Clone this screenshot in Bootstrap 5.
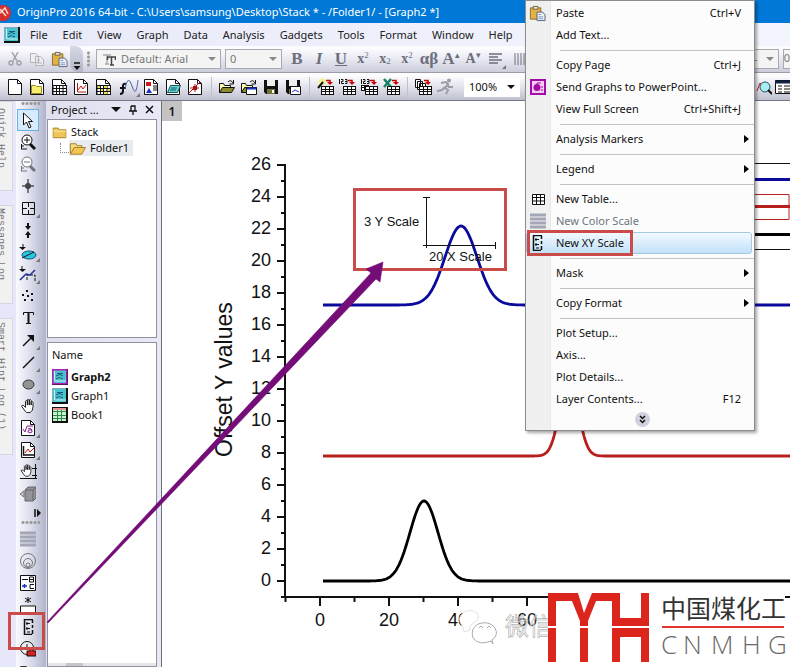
<!DOCTYPE html>
<html lang="en">
<head>
<meta charset="utf-8">
<meta name="viewport" content="width=device-width, initial-scale=1">
<title>OriginPro 2016</title>
<link href="https://cdn.jsdelivr.net/npm/bootstrap@5.3.0/dist/css/bootstrap.min.css" rel="stylesheet">
<style>
body{font:11px/16px "Noto Sans","Open Sans",sans-serif;color:#111;background:#e6e7f8}
button,select{font:inherit;color:inherit}
button{background:none;border:0;padding:0}
svg{display:block;flex:none}
.titlebar{height:23px;background:#0078d7;color:#fff;white-space:nowrap}
.menubar{height:23px;background:linear-gradient(90deg,#e9eaf8,#f3f5fe);gap:15px}
.menubar a{color:#222;text-decoration:none}
.menubar svg{margin-right:-5px}
.strip{height:27px;background:linear-gradient(#fcfcff 10%,#e6e6f0 55%,#cccddb);border-bottom:1px solid #9c9ca8}
.strip.second{height:28px;background:linear-gradient(#fdfdff 10%,#dddde8 60%,#bfc0cf);border-bottom:1px solid #77778a}
.slot{width:22px;height:22px;display:flex;align-items:center;justify-content:center;flex:none;position:relative}
.slot.corner::after{content:"";position:absolute;right:0;bottom:1px;border:2px solid transparent;border-right-color:#777;border-bottom-color:#777}
.fmt{color:#6c6f7c;font:bold 17px/22px "Liberation Serif",serif}
.fmt.small-x{font-size:14px}
.fmt sup,.fmt sub{font-size:9px;font-weight:400}
.rule{width:1px;height:20px;background:#bfc0cc;margin:0 4px 0 5px;flex:none}
.grip-v{width:3px;height:16px;background:radial-gradient(circle,#999 1px,transparent 2px) 0 0/3px 4px;flex:none;margin:0 6px 0 4px}
.grip-h{height:3px;width:19px;background:radial-gradient(circle,#999 1px,transparent 2px) 0 0/4px 3px;flex:none}
.combo{height:20px;border:1px solid #a9a9b2;background:#f4f4f4;color:#777;position:relative;flex:none}
.combo select{appearance:none;background:none;border:0;width:100%;height:18px;line-height:18px;padding:0 4px;outline:0}
.combo.arrowed::after{content:"";position:absolute;right:4px;top:7px;border:4px solid transparent;border-top-color:#888;border-bottom:0;pointer-events:none}
.combo.font-box{width:125px}.combo.font-box select{padding-left:24px}
.combo.font-box svg{position:absolute;left:6px;top:4px}
.combo.size-box{width:57px}.combo.edge-box{width:32px}
.combo.zoom-box{width:56px;background:#fff;color:#111;border-color:#fff}
.combo.zoom-box::after{border-top-color:#111}
.more{width:13px;height:26px;background:linear-gradient(#d8d9e6,#b4b5c8);border-radius:0 8px 0 8px;flex:none}
.docktabs{width:16px;flex:none;overflow:hidden;padding-bottom:212px;gap:14px}
.docktabs button{writing-mode:vertical-rl;font:10px/14px "Liberation Mono",monospace;color:#777;background:#f1f1f1;border:1px solid #d6d6e2;border-left:0;width:20px;margin-left:-7px;text-align:left;white-space:nowrap;padding-right:5px}
.tab-a{height:90px;padding-top:6px!important}.tab-b{height:99px;padding-top:2px!important}.tab-c{height:137px;padding-top:3px!important}
.tools{width:30px;background:linear-gradient(90deg,#f9f9ff,#dfe0ed 45%,#b1b3ca);flex:none;padding:1px 0 0 1px;overflow:hidden}
.tools>*{flex:none}
.tools .picked{border:1px solid #6ab0e4;background:#d7ebfc}
.tools .slot.corner::after{right:-1px}
.tools .fold{height:16px;width:29px;padding-left:12px}
.explorer{width:115px;flex:none;padding:0 4px 0 1px;background:linear-gradient(90deg,#dfe0ee,#e9e9f6)}
.explorer h2{font:11px/18px "Noto Sans",sans-serif;height:18px;margin:0}
.panel-box{background:#fff;border:1px solid #8f90a2}
.tree{height:219px;flex:none}
.tree ul{list-style:none;margin:0;padding:0}
.tree .branch{border-left:1px dotted #888;border-bottom:1px dotted #888;width:9px;height:10px;margin-left:12px}
.files button{height:19px;gap:3px}
.hbar{height:3px;background:#e6e6e6}
.hbar i{display:block;height:3px;width:17px;margin-left:18px;background:#c6c6c6}
.edge{width:1px;background:#70707c;flex:none}
.canvas{background:#fff;min-width:0;position:relative;overflow:hidden}
.layer-no{width:20px;height:20px;background:#c4c4c4;position:absolute;left:0;top:0;font-weight:600;font-size:12px;line-height:22px;text-align:center}
.plot text{font-family:"Liberation Sans",Arial,sans-serif;fill:#111}
.ctx{position:absolute;left:525px;top:0;width:230px;background:linear-gradient(90deg,#f0f0f0 24px,#d4d4d4 24px,#fcfcfc 25px);border:1px solid #8c8c8c;box-shadow:2px 2px 3px rgba(0,0,0,.35);padding:1px 2px 0 0}
.ctx .entry{display:flex;align-items:center;width:100%;height:22px;padding-right:10px;border:1px solid transparent}
.ctx .entry .pic{width:22px;margin-right:7px;display:flex;justify-content:center}
.ctx .entry.hot{background:linear-gradient(#f2f9ff,#c1e1f8);border-color:#a4c8e2;border-radius:3px}
.ctx .entry.hot .pic,.ctx .entry .pic.near{justify-content:flex-start;padding-left:2px}
.ctx .entry .sub{margin-right:-8px}
.ctx .gap-line{height:8px;display:flex;align-items:center}
.ctx .gap-line::before{content:"";flex:1;height:1px;background:#c2c2c6;margin-left:34px;margin-right:-2px}
.chev{width:15px;height:15px;border-radius:50%;background:#d0d1de;margin:2px auto 3px 109px;display:flex;align-items:center;justify-content:center}
.over{position:absolute;left:0;top:0;pointer-events:none}
</style>
</head>
<body class="vh-100 overflow-hidden d-flex flex-column position-relative">
<svg width="0" height="0" class="position-absolute" aria-hidden="true"><defs>
<symbol id="page" viewBox="0 0 16 16"><path d="M1.500 .5h9l4 4v11h-13z" fill="#fff" stroke="#111"/><path d="M10.500 .5v4h4" fill="none" stroke="#111"/></symbol>
<symbol id="grid" viewBox="0 0 16 16"><path d="M2 6h13v9H2z" fill="#fff"/><path d="M1.500 6.500h14M1.500 9.500h14M1.500 12.500h14M1.500 15.500h14M2 6v10M5.500 6v10M8.500 6v10M12 6v10M15.500 6v10" stroke="#111" fill="none"/></symbol>
<symbol id="gwin" viewBox="0 0 16 16"><path d="M0 0h16v16H0z" fill="#111"/><path d="M0 0h14v14H0z" fill="#8ab"/><path d="M1 1h13v13H1z" fill="#49c3cf"/><path d="M5 4.500h6M4 7q4-3 7 0M4 10q3-3 7 0" stroke="#135a78" fill="none"/><path d="M2.500 2v10M3 12h11" stroke="#c9eef0"/></symbol>
<symbol id="folder" viewBox="0 0 16 16"><path d="M.5 3.500h6l1 2h8v9H.5z" fill="#efc65c" stroke="#a57c26"/><path d="M1 7h14" stroke="#fff0b0"/></symbol>
<symbol id="openf" viewBox="0 0 18 16"><path d="M1.500 14V3.500h6l1 2h5v3" fill="#f7da83" stroke="#a57c26"/><path d="M1.500 14.500l4-7h12l-4 7z" fill="#f1c653" stroke="#a57c26"/></symbol>
<symbol id="openb" viewBox="0 0 16 16"><path d="M.5 13.500v-9h4l1 2h6v2" fill="#ffffb0" stroke="#111"/><path d="M.5 13.500l3-5h12l-3 5z" fill="#8e8b2e" stroke="#111"/><path d="M9 3q3-3 5 1M14.500 1v4h-4" fill="none" stroke="#111"/></symbol>
<symbol id="disk" viewBox="0 0 16 16"><path d="M1 1h14v14H3l-2-2z" fill="#111"/><path d="M4 1h8v6H4z" fill="#eee"/><path d="M4 10h8v5H4z" fill="#74743a"/><path d="M9 11h2v3H9z" fill="#fff"/></symbol>
<symbol id="redarr" viewBox="0 0 18 18"><path d="M10 2.500h4v2" fill="none" stroke="#c00" stroke-width="1.500"/><path d="M11 4h6l-3 3z" fill="#c00"/></symbol>
<symbol id="sheet" viewBox="0 0 18 18"><path d="M5 8h13v9H5z" fill="#111"/><path d="M6 9h3v2H6zM10 9h3v2h-3zM14 9h3v2h-3zM6 12h3v1H6zM10 12h3v1h-3zM14 12h3v1h-3zM6 14h3v2H6zM10 14h3v2h-3zM14 14h3v2h-3z" fill="#fff"/></symbol>
<symbol id="nums" viewBox="0 0 18 18"><path d="M1.500 1v5M3 1.500h2v2H3.500v2H6M7 1.500h2v4H7M7 3.500h2" stroke="#111" fill="none"/></symbol>
<symbol id="lens" viewBox="0 0 16 16"><path d="M10 10l5 5" stroke="currentColor" stroke-width="3"/><circle cx="7" cy="6" r="5" fill="#fff" stroke="currentColor"/><path d="M4 6h6" stroke="currentColor"/><path d="M1.500 10v5M1 15h6M1 12h3" stroke="currentColor" fill="none"/></symbol>
<symbol id="paste" viewBox="0 0 18 18"><path d="M1.500 3h11v12h-11z" fill="#e3b243" stroke="#8a6a2a"/><path d="M4.500 1.500h5v3h-5z" fill="#e8e2cc" stroke="#6d614a"/><path d="M8.500 7.500h6l2.500 3v6H8.500z" fill="#eef2fa" stroke="#53617a"/><path d="M10 10h3M10 12.500h5M10 14.500h5" stroke="#7c96c0"/></symbol>
<symbol id="xy" viewBox="0 0 16 16"><path d="M4 .5h9M4.500 0v16M4 15.500h8M12.500 1v3M12.500 6v3M12.500 11v4" stroke="#111" fill="none" stroke-width="1.500"/><path d="M7 3v3M6 4.500h4M7 8v3M6 9.500h4M7 13h3" stroke="#111" fill="none"/></symbol>
<symbol id="hand" viewBox="0 0 16 16"><path d="M4.500 13.500L.8 8.500q0-2 2-1l2 2V3q1-2 2 0v4V1.500q1-2 2 0V7V2q1-2 2 0v5V4q1-2 2 0v5q0 4-3 6H6z" fill="#fff" stroke="#111"/></symbol>
<symbol id="bars" viewBox="0 0 16 16"><path d="M0 2h16M0 6h16M0 10h16M0 14h16" stroke="#a3a6b6" stroke-width="3"/></symbol>
</defs></svg>

<header class="titlebar d-flex align-items-center flex-shrink-0">
<svg width="17" height="18" viewBox="0 0 17 18"><circle cx="3" cy="10" r="8" fill="#d42e2e"/><path d="M-2 12L5 5l3 6M0 6l6 7" stroke="#ffd9d0" stroke-width="1.500" fill="none"/></svg>
<span>OriginPro 2016 64-bit - C:\Users\samsung\Desktop\Stack * - /Folder1/ - [Graph2 *]</span>
</header>
<nav class="menubar d-flex align-items-center flex-shrink-0 ps-1">
<svg width="16" height="16"><use href="#gwin"/></svg>
<a href="#">File</a><a href="#">Edit</a><a href="#">View</a><a href="#">Graph</a><a href="#">Data</a><a href="#">Analysis</a><a href="#">Gadgets</a><a href="#">Tools</a><a href="#">Format</a><a href="#">Window</a><a href="#">Help</a>
</nav>

<div class="strip d-flex align-items-center flex-shrink-0 ps-1">
<button class="slot" aria-label="Cut"><svg width="14" height="14" viewBox="0 0 14 14" fill="none" stroke="#a2a2a8" stroke-width="1.500"><path d="M4 0l5 9M10 0L5 9"/><circle cx="3" cy="11" r="2"/><circle cx="11" cy="11" r="2"/></svg></button>
<button class="slot" aria-label="Copy"><svg width="16" height="14" viewBox="0 0 16 14" fill="#eee" stroke="#b5b5bc"><path d="M1.500 1.500h5l3 3v6h-8zM6.500 4.500h5l3 3v6h-8z"/><path d="M8 8h3M8 11h5"/></svg></button>
<button class="slot" aria-label="Paste"><svg width="17" height="17"><use href="#paste"/></svg></button>
<button class="more" aria-label="More"><svg width="13" height="26" viewBox="0 0 13 26"><path d="M4 17h6" stroke="#111" stroke-width="1.500"/><path d="M3.500 20h7L7 24z" fill="#111"/></svg></button>
<span class="grip-v"></span>
<label class="combo arrowed font-box"><svg width="13" height="12" viewBox="0 0 13 12"><path d="M0 1h8M4 1v9M2 10h4" stroke="#aaa" stroke-width="1.500"/><path d="M4 3h9M8.500 3v8M7 11h4M4.500 3v3M12.500 3v3" stroke="#444" stroke-width="1.500"/></svg><select aria-label="Font"><option>Default: Arial</option></select></label>
<label class="combo arrowed size-box ms-1 me-1"><select aria-label="Font size"><option>0</option></select></label>
<button class="slot fmt">B</button><button class="slot fmt fst-italic">I</button><button class="slot fmt text-decoration-underline">U</button>
<button class="slot fmt small-x">x<sup>2</sup></button><button class="slot fmt small-x">x<sub>2</sub></button><button class="slot fmt small-x">x<sup>2</sup></button>
<button class="slot fmt">αβ</button><button class="slot fmt">A<sup>▴</sup></button><button class="slot fmt small-x">A<sup>▾</sup></button>
<button class="slot corner" aria-label="Align"><svg width="13" height="12" viewBox="0 0 13 12"><path d="M0 1h13M0 4h9M0 7h13M0 10h9" stroke="#6c6f7c" stroke-width="1.500"/></svg></button>
<button class="slot ms-1" aria-label="Lines"><svg width="14" height="12" viewBox="0 0 14 12"><path d="M1 0v12M4 0v12M7 0v12M10 0v12M13 0v12" stroke="#6c6f7c"/></svg></button>
<label class="combo arrowed edge-box ms-auto me-1"><select aria-label="Line style"><option>–</option></select></label>
<span class="combo border-end-0">0</span>
</div>

<div class="strip second d-flex align-items-center flex-shrink-0 ps-1">
<button class="slot" aria-label="New project"><svg width="16" height="16"><use href="#page"/></svg></button>
<button class="slot" aria-label="New folder"><svg width="16" height="16"><use href="#page"/><path d="M2.500 14.500v-8h4l1 1h5v7z" fill="#f5ee70" stroke="#998c28"/></svg></button>
<button class="slot" aria-label="New workbook"><svg width="16" height="16"><use href="#page"/><use href="#grid"/></svg></button>
<button class="slot" aria-label="New graph"><svg width="16" height="16"><use href="#page"/><path d="M4.500 4v9H13" stroke="#a22" fill="none"/><path d="M5 11l3-4 2 3 3-4" stroke="#c11" fill="none"/></svg></button>
<button class="slot" aria-label="New matrix"><svg width="16" height="16"><use href="#page"/><use href="#grid"/><path d="M3 7h2v2H3zM6 10h2v2H6zM9 7h3v2H9zM13 10h2v2h-2zM9 13h3v2H9z" fill="#f0e040"/></svg></button>
<button class="slot corner ms-1" aria-label="New function"><svg width="20" height="16" viewBox="0 0 20 16"><path d="M7 5Q4 4 4 7v5q0 3-3 3M1 9h6" fill="none" stroke="#111" stroke-width="2"/><path d="M6 10q3-16 7-3t6-6" fill="none" stroke="#4965b5"/></svg></button>
<button class="slot" aria-label="New layout"><svg width="16" height="16"><use href="#page"/><path d="M3 3h5v4H3z" fill="#d21919"/><path d="M10 7h4M10 9h4M10 11h4" stroke="#111"/><path d="M3 14l3-5 3 5z" fill="#1a31c5"/></svg></button>
<button class="slot" aria-label="New notes"><svg width="16" height="16"><use href="#page"/><path d="M2.500 13.500l3-7h10l-3 7z" fill="#69d6da" stroke="#155"/><path d="M6 9h6M5 11h6" stroke="#155"/></svg></button>
<button class="slot" aria-label="New equation"><svg width="16" height="16"><use href="#page"/><path d="M2 14L13 3M3 9h9M8 5v8" stroke="#c31616"/><path d="M6 7h4v4H6z" fill="#a11"/></svg></button>
<span class="rule"></span>
<button class="slot" aria-label="Open"><svg width="16" height="16"><use href="#openb"/></svg></button>
<button class="slot" aria-label="Open template"><svg width="16" height="16"><use href="#openb"/><path d="M5.500 8.500h10v7h-10z" fill="#fff" stroke="#111"/><path d="M6 9.500h9" stroke="#1a31c5" stroke-width="2"/></svg></button>
<button class="slot" aria-label="Save"><svg width="16" height="16"><use href="#disk"/></svg></button>
<button class="slot" aria-label="Save template"><svg width="16" height="16"><use href="#disk"/><path d="M5.500 7.500h10v8h-10z" fill="#fff" stroke="#111"/><path d="M7 13l3-2 4 2" stroke="#1a31c5" fill="none"/></svg></button>
<span class="rule"></span>
<button class="slot" aria-label="Import wizard"><svg width="18" height="18"><circle cx="6" cy="4" r="3.500" fill="#f6f28a"/><path d="M2 10l5-6" stroke="#111" stroke-width="2"/><use href="#sheet"/><use href="#redarr"/></svg></button>
<button class="slot" aria-label="Import ASCII"><svg width="18" height="18"><use href="#sheet"/><use href="#nums"/><use href="#redarr"/></svg></button>
<button class="slot" aria-label="Import multiple"><svg width="18" height="18"><path d="M1 7h8v6H1z" fill="#111"/><path d="M2 8h2v1H2zM5 8h3v1H5zM2 10h2v2H2z" fill="#fff"/><use href="#sheet"/><use href="#nums"/><use href="#redarr"/></svg></button>
<button class="slot" aria-label="Import Excel"><svg width="18" height="18"><path d="M2 1l7 8M9 1L2 9" stroke="#138060" stroke-width="2.500"/><use href="#sheet"/><use href="#redarr"/></svg></button>
<span class="rule"></span>
<button class="slot" aria-label="Batch"><svg width="18" height="18"><path d="M1.500 1.500h5v8h-5zM3.500 3.500h5v8h-5zM5.500 5.500h6v8h-6z" fill="#fff" stroke="#111"/><use href="#sheet"/><use href="#redarr"/></svg></button>
<button class="slot" aria-label="Run"><svg width="17" height="17" viewBox="0 0 17 17"><circle cx="12" cy="2.500" r="2" fill="#9a9ca6"/><path d="M4 5l5-1 2 2-3 4 3 2-2 4M8 9l-3 3-5 1M10 6l2 3h4" fill="none" stroke="#9a9ca6" stroke-width="2"/></svg></button>
<label class="combo arrowed zoom-box ms-2"><select aria-label="Zoom"><option>100%</option></select></label>
<button class="slot ms-auto" aria-label="Find"><svg width="16" height="16"><path d="M1 12l3-8 4 4" stroke="#c11" fill="none"/><circle cx="9" cy="8" r="5" fill="#a9eef2" stroke="#256"/><path d="M12 11l4 4" stroke="#111" stroke-width="2"/></svg></button>
<svg width="15" height="14"><path d="M.5 .5h18v13H.5z" fill="#fff" stroke="#111"/><path d="M0 2h18" stroke="#124" stroke-width="3"/><path d="M3 6h4M9 6h6M3 9h4M9 9h6M3 12h4M9 12h6" stroke="#111"/></svg>
</div>

<div class="d-flex flex-grow-1 overflow-hidden">
<aside class="docktabs d-flex flex-column"><button class="tab-a">Quick Help</button><button class="tab-b">Messages Log</button><button class="tab-c">Smart Hint Log (1)</button></aside>
<div class="tools d-flex flex-column align-items-start">
<span class="grip-h ms-1 mb-1"></span>
<button class="slot picked" aria-label="Pointer"><svg width="12" height="17" viewBox="0 0 12 17"><path d="M1.500 1v12l3-3 2.500 6 2-1-2.500-5.500h4z" fill="#fff" stroke="#111"/></svg></button>
<button class="slot" aria-label="Zoom in"><svg width="16" height="16"><use href="#lens"/><path d="M7 3v6" stroke="#111"/></svg></button>
<button class="slot text-secondary" aria-label="Zoom out"><svg width="16" height="16"><use href="#lens"/></svg></button>
<button class="slot" aria-label="Screen reader"><svg width="12" height="14" viewBox="0 0 12 14"><path d="M6 0v14M0 7h12" stroke="#111"/><path d="M4 5h4v4H4z" fill="none" stroke="#111"/></svg></button>
<button class="slot corner" aria-label="Data reader"><svg width="13" height="13" viewBox="0 0 13 13"><path d="M.5 .5h12v12H.5zM6.500 1v4M6.500 8v4M1 6.500h4M8 6.500h4" fill="none" stroke="#111"/></svg></button>
<button class="slot" aria-label="Selector"><svg width="8" height="15" viewBox="0 0 8 15"><path d="M4 0v3M4 12v3" stroke="#111" stroke-width="2"/><path d="M1 3h6L4 7zM1 12h6L4 8z" fill="#111"/></svg></button>
<button class="slot corner" aria-label="Selection"><svg width="18" height="16" viewBox="0 0 18 16"><ellipse cx="10" cy="11" rx="7" ry="4" fill="#28c8e2" stroke="#14517a"/><path d="M4 0v4M3 14L15 8" stroke="#111"/><path d="M0 3h7L3.500 6z" fill="#111"/></svg></button>
<button class="slot corner" aria-label="Mask"><svg width="18" height="16" viewBox="0 0 18 16"><path d="M3 0v4M8 14V9h8v6" stroke="#111" fill="none" stroke-dasharray="3 1"/><path d="M0 3h7L3.500 6z" fill="#111"/><path d="M1 14l6-6 4 1 5-5" stroke="#1a2e9c" stroke-width="1.500" fill="none"/></svg></button>
<button class="slot" aria-label="Draw data"><svg width="14" height="12" viewBox="0 0 14 12" fill="#111"><path d="M5 0h2v2H5zM1 4h2v2H1zM6 5h2v2H6zM10 3h2v2h-2zM3 9h2v2H3zM10 9h2v2h-2z"/></svg></button>
<button class="slot" aria-label="Text"><svg width="13" height="14" viewBox="0 0 13 14"><path d="M1.500 4V1.500h10V4M4 12.500h5" fill="none" stroke="#111"/><path d="M6.500 1v12" stroke="#111" stroke-width="2"/></svg></button>
<button class="slot corner" aria-label="Arrow"><svg width="13" height="13" viewBox="0 0 13 13"><path d="M1 12l8-8" stroke="#111" stroke-width="1.500"/><path d="M5 1h7v7z" fill="#111"/></svg></button>
<button class="slot corner" aria-label="Line"><svg width="13" height="13" viewBox="0 0 13 13"><path d="M1 12L12 1" stroke="#111" stroke-width="1.500"/></svg></button>
<button class="slot corner" aria-label="Ellipse"><svg width="13" height="11" viewBox="0 0 13 11"><ellipse cx="6.500" cy="5.500" rx="5.500" ry="4.500" fill="#949494" stroke="#333"/></svg></button>
<button class="slot" aria-label="Pan"><svg width="15" height="16"><use href="#hand"/></svg></button>
<button class="slot corner" aria-label="Equation"><svg width="16" height="16"><use href="#page"/><path d="M3 9l2 3 2-6h6M8 9q4-2 4 3-4 2-4-1 2-2 4-1" fill="none" stroke="#83218d"/></svg></button>
<button class="slot corner" aria-label="Graph"><svg width="16" height="16"><use href="#page"/><path d="M3.500 4v9H14" fill="none" stroke="#111" stroke-width="1.500"/><path d="M5 11l3-4 2 3 4-4" fill="none" stroke="#b11"/></svg></button>
<button class="slot" aria-label="Rescale"><svg width="17" height="16"><use href="#hand" width="14" height="13"/><path d="M15.500 0v15M0 14.500h17M12 11.500h5M12 4.500h5" stroke="#111" fill="none"/></svg></button>
<button class="slot" aria-label="3D"><svg width="16" height="16" viewBox="0 0 16 16"><path d="M5 4l3-3h8v11l-3 3H5z" fill="#959599" stroke="#666"/><path d="M5 4h8v11M13 4l3-3" fill="none" stroke="#666"/><path d="M4 5v6L0 8z" fill="#ccc" stroke="#777"/></svg></button>
<button class="fold d-flex align-items-center justify-content-center" aria-label="More tools"><svg width="8" height="8" viewBox="0 0 8 8"><path d="M1 0v8" stroke="#111" stroke-width="1.500"/><path d="M3 0v8l4-4z" fill="#111"/></svg></button>
<span class="grip-h ms-1 mb-1"></span>
<button class="slot" aria-label="Color scale"><svg width="16" height="16"><use href="#bars"/></svg></button>
<button class="slot" aria-label="Bubble scale"><svg width="16" height="16" viewBox="0 0 16 16" fill="none" stroke="#777"><circle cx="8" cy="8" r="7.500"/><circle cx="8" cy="10" r="4.500"/><circle cx="8" cy="12" r="2"/></svg></button>
<button class="slot" aria-label="Legend"><svg width="16" height="16" viewBox="0 0 16 16"><path d="M.5 .5h15v15H.5z" fill="#fff" stroke="#111"/><path d="M2 4.500h6" stroke="#111"/><path d="M2 11h5M4.500 9v4" stroke="#13b" stroke-width="1.500"/><path d="M9.500 2v5h4V2h-4M9.500 4.500h4M14 9.500h-4v4h4" fill="none" stroke="#111"/></svg></button>
<button class="slot" aria-label="Asterisk"><svg width="16" height="18" viewBox="0 0 16 18"><path d="M8 1v6M5 2l6 4M11 2L5 6" stroke="#111"/><path d="M.5 18v-8h15v8" fill="#fff" stroke="#111"/></svg></button>
<button class="slot" aria-label="New XY Scale"><svg width="16" height="16"><use href="#xy"/></svg></button>
<button class="slot" aria-label="Date stamp"><svg width="16" height="16" viewBox="0 0 16 16"><circle cx="7" cy="7" r="6.500" fill="#eee" stroke="#111"/><path d="M7 3v4h-3" fill="none" stroke="#111"/><path d="M7 10h3V7h3v3h3v5H7z" fill="#d22323" stroke="#111"/></svg></button>
<button class="slot" aria-label="Project path"><svg width="16" height="16"><path d="M.5 3.500h6l1 2h8v9H.5z" fill="#f2e21c" stroke="#333"/></svg></button>
</div>
<aside class="explorer d-flex flex-column">
<h2 class="d-flex align-items-center ps-1"><span class="flex-grow-1">Project ...</span>
<svg width="52" height="10" viewBox="0 0 52 10"><path d="M6 2h10l-5 5z" fill="#111"/><path d="M26 1v5h4V1h-4M24 6h8M28 6v4M30 1v5" fill="none" stroke="#111" stroke-width="1.300"/><path d="M41 1l7 7M48 1l-7 7" stroke="#111" stroke-width="1.500"/></svg></h2>
<div class="panel-box tree">
<ul><li><span class="d-flex align-items-center gap-1 ps-1 pt-1"><svg width="15" height="14" viewBox="0 0 16 16"><use href="#folder"/></svg>Stack</span>
<ul><li class="d-flex align-items-center"><span class="branch"></span><span class="d-flex align-items-center gap-1 pe-1 bg-body-secondary"><svg width="17" height="16"><use href="#openf"/></svg>Folder1</span></li></ul></li></ul>
</div>
<div class="panel-box files flex-grow-1 mt-1 pt-1 d-flex flex-column align-items-start">
<span class="ps-1 mb-1">Name</span>
<button class="d-flex align-items-center ps-1 fw-bold"><svg width="16" height="16"><use href="#gwin"/><path d="M.8 .8h14v14H.8z" fill="none" stroke="#b21cb8" stroke-width="1.500"/></svg>Graph2</button>
<button class="d-flex align-items-center ps-1"><svg width="16" height="16"><use href="#gwin"/></svg>Graph1</button>
<button class="d-flex align-items-center ps-1"><svg width="16" height="16"><path d="M0 0h16v16H0z" fill="#111"/><path d="M1 1h13v13H1z" fill="#c9f0c9"/><path d="M1 4.500h13M1 8.500h13M1 11.500h13M5.500 1v13M9.500 1v13" stroke="#2a8a52"/><path d="M1 2h13" stroke="#e79090" stroke-width="2"/></svg>Book1</button>
<div class="hbar mt-auto w-100"><i></i></div>
</div>
</aside>
<span class="edge"></span>
<main class="canvas flex-grow-1">
<svg class="plot" id="plot" width="629" height="566" viewBox="162 101 629 566"></svg>
<span class="layer-no">1</span>
</main>
</div>

<svg class="over" width="790" height="667" viewBox="0 0 790 667">
<g fill="#fff" stroke="#aaa"><path d="M464 632l-1-5q-6-7-2-12 8-9 17-1 2 4-3 8-6 3-5 8z" stroke="#ccc" stroke-width=".6"/><path d="M491 641q-12 5-18-3-3-9 5-14 11-4 17 4 4 7-3 12l1 4z"/><path d="M479 628l2-2 2 2M487 628l2-2 2 2" fill="none"/></g>
<text x="505" y="635" font-size="24" font-family="Noto Sans CJK SC,sans-serif" fill="#fff" fill-opacity=".6" stroke="#999" stroke-width=".5">微信</text>
<path d="M548 589h237v74H548z" fill="#fff"/>
<path d="M548 593h30l6 20 8-20h28v25h21v-25h8v33h-37v-25h-16l-8 20v5h-8v-5l-8-20h-16v25h-8zM548 628h8v34h-8zM580 628h8v34h-8zM612 628h37v34h-8v-25h-21v25h-8z" fill="#dc251c"/>
<text x="661" y="618" font-size="25" font-family="Noto Sans CJK SC,sans-serif" fill="#333">中国煤化工</text>
<path d="M662 627h122" stroke="#e2362c" stroke-width="2"/>
<text x="661 683 711 742 768" y="654" font-size="26" font-family="Open Sans,sans-serif" font-weight="300" fill="#6a6a6a">CNMHG</text>
</svg>

<div class="ctx" role="menu">
<button class="entry"><span class="pic near"><svg width="17" height="17"><use href="#paste"/></svg></span>Paste<span class="ms-auto">Ctrl+V</span></button>
<button class="entry"><span class="pic"></span>Add Text...</button>
<div class="gap-line"></div>
<button class="entry"><span class="pic"></span>Copy Page<span class="ms-auto">Ctrl+J</span></button>
<button class="entry"><span class="pic"><svg width="16" height="16" viewBox="0 0 16 16"><path d="M1 1h14v14H1z" fill="#f4ccf4" stroke="#a30ba8" stroke-width="2"/><circle cx="7" cy="8.500" r="3.500" fill="#a30ba8"/><path d="M7 8V4h4M12 7v2M12 10v2" stroke="#a30ba8" fill="none"/></svg></span>Send Graphs to PowerPoint...</button>
<button class="entry"><span class="pic"></span>View Full Screen<span class="ms-auto">Ctrl+Shift+J</span></button>
<div class="gap-line"></div>
<button class="entry"><span class="pic"></span>Analysis Markers<svg class="ms-auto sub" width="5" height="8"><path d="M0 0v8l5-4z"/></svg></button>
<div class="gap-line"></div>
<button class="entry"><span class="pic"></span>Legend<svg class="ms-auto sub" width="5" height="8"><path d="M0 0v8l5-4z"/></svg></button>
<div class="gap-line"></div>
<button class="entry"><span class="pic"><svg width="13" height="11" viewBox="0 0 13 11"><path d="M.5 .5h12v10H.5z" fill="#fff" stroke="#111"/><path d="M0 3.500h13M0 7h13M4.500 0v11M8.500 0v11" stroke="#111"/></svg></span>New Table...</button>
<button class="entry text-secondary"><span class="pic"><svg width="16" height="16"><use href="#bars"/></svg></span>New Color Scale</button>
<button class="entry hot"><span class="pic"><svg width="16" height="16"><use href="#xy"/></svg></span>New XY Scale</button>
<div class="gap-line"></div>
<button class="entry"><span class="pic"></span>Mask<svg class="ms-auto sub" width="5" height="8"><path d="M0 0v8l5-4z"/></svg></button>
<div class="gap-line"></div>
<button class="entry"><span class="pic"></span>Copy Format<svg class="ms-auto sub" width="5" height="8"><path d="M0 0v8l5-4z"/></svg></button>
<div class="gap-line"></div>
<button class="entry"><span class="pic"></span>Plot Setup...</button>
<button class="entry"><span class="pic"></span>Axis...</button>
<button class="entry"><span class="pic"></span>Plot Details...</button>
<button class="entry"><span class="pic"></span>Layer Contents...<span class="ms-auto">F12</span></button>
<button class="chev" aria-label="Expand"><svg width="7" height="9" viewBox="0 0 7 9"><path d="M1 1l2.500 2.500L6 1M1 5l2.500 2.500L6 5" fill="none" stroke="#111" stroke-width="1.500"/></svg></button>
</div>

<svg class="over" width="790" height="667" viewBox="0 0 790 667" fill="none" stroke="#cb4a4a" stroke-width="3">
<path d="M528.500 231.500h103v23h-103zM354.500 189.500h151v80h-151zM9.500 613.500h34v35h-34z"/>
<path d="M47 622L371 273l-5-4 17-7-3 20-4-3L48 623z" fill="#750d78" stroke="#750d78" stroke-width=".6"/>
</svg>

<script>
const parts = [];
const line = (d, color, w) => parts.push(`<path d="${d}" fill="none" stroke="${color}" stroke-width="${w}"/>`);
const label = (x, y, s, size, extra = '') => parts.push(`<text x="${x}" y="${y}" font-size="${size}" ${extra}>${s}</text>`);
// Gaussian peak on a flat baseline
const peak = (x0, x1, base, mid, height, sigma, color) => {
  let d = '';
  for (let x = x0; x <= x1; x++) d += (d ? 'L' : 'M') + x + ' ' + (base - height * Math.exp(-((x - mid) ** 2) / (2 * sigma * sigma))).toFixed(1);
  line(d, color, 2.8);
};
line('M285 164V598M284 597H790', '#111', 2);
for (let v = 26; v >= -1; v--) {
  const y = 581 - v * 16;
  line(`M${v % 2 ? 281 : 277} ${y}H285`, '#111', 2);
  if (v % 2 === 0) label(271, y + 5, v, 18, 'text-anchor="end"');
}
for (let v = -10; v <= 130; v += 10) {
  const x = 320 + v * 3.45;
  line(`M${x} 597v${v % 20 ? 5 : 9}`, '#111', 2);
  if (v % 20 === 0 && v >= 0 && v <= 60) label(x, 626, v, 18, 'text-anchor="middle"');
}
label(0, 0, 'Offset Y values', 23, 'transform="translate(232 457) rotate(-90)"');
peak(323, 790, 581, 424, 80, 14, '#000');
peak(323, 790, 456, 569, 80, 9, '#b8201e');
peak(323, 790, 305, 461, 79, 16, '#0a0a9c');
line('M426.500 197v51M423 197.500h7M423 245.500h73M495.500 242v7', '#111', 1);
label(364, 226, '3 Y Scale', 13);
label(429, 261, '20 X Scale', 13);
line('M700 163.500H790M700 249.500H790', '#111', 1);
line('M700 179.500H790', '#0a0a9c', 3);
line('M700 194.500H789V219.500H700', '#b8201e', 1);
line('M700 206.500H790', '#b8201e', 3);
line('M700 234.500H790', '#000', 3);
document.getElementById('plot').innerHTML = parts.join('');
</script>
<script src="https://cdn.jsdelivr.net/npm/bootstrap@5.3.0/dist/js/bootstrap.bundle.min.js"></script>
</body>
</html>
